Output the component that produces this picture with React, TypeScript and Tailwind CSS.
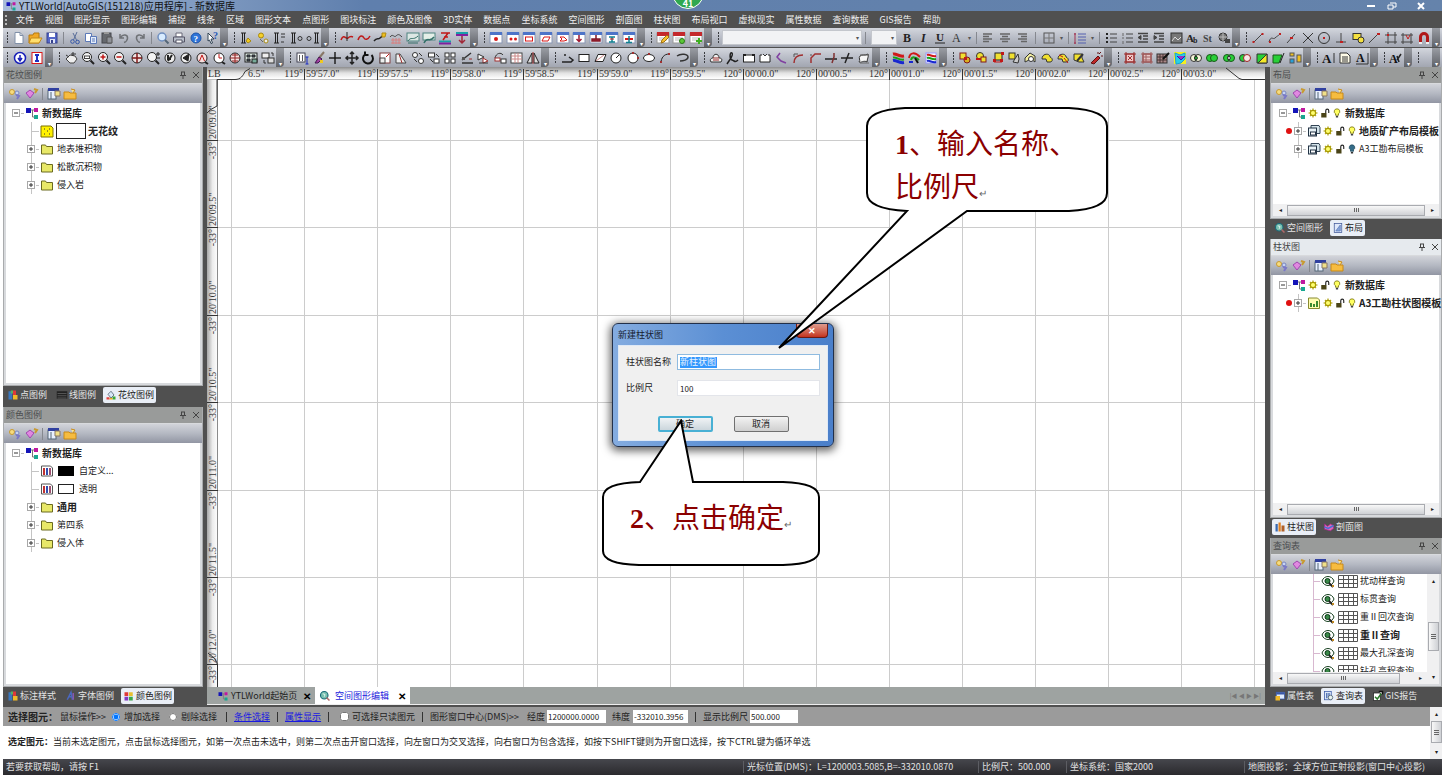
import React from 'react';

// small helpers for the 16x16 icon drawings
const p = (d: string, stroke = '#333', fill = 'none', w = 1) => <path d={d} stroke={stroke} fill={fill} strokeWidth={w} />;
const c = (cx: number, cy: number, r: number, stroke = '#333', fill = 'none', w = 1) => (
  <circle cx={cx} cy={cy} r={r} stroke={stroke} fill={fill} strokeWidth={w} />
);
const r = (x: number, y: number, w: number, h: number, fill = 'none', stroke = 'none') => (
  <rect x={x} y={y} width={w} height={h} fill={fill} stroke={stroke} />
);
const t = (s: string, x: number, y: number, fill = '#222', size = 10, weight = 700, style = 'normal') => (
  <text x={x} y={y} fill={fill} fontSize={size} fontWeight={weight} fontStyle={style} fontFamily="Liberation Serif, serif">{s}</text>
);

const lens = <>{c(7, 7, 4.5, '#222', '#f4f4f4')}{p('M10.5 10.5l3.5 3.5', '#222', 'none', 2)}</>;
const win = <>{r(2, 3, 12, 10, '#fff', '#8a97b5')}{r(2, 2, 12, 3, '#4d74c8')}</>;
const calendar = <>{r(2, 3, 12, 10, '#fff', '#999')}{r(2, 2, 12, 4, '#c4282c')}{p('M4 8h8M4 10h8', '#bbb')}</>;
const pillar = 'M3 3h5M3 13h5M4.5 3v10M6.500 3v10';
const pillarRight = 'M9 3h5M9 13h5M10.500 3v10M12.500 3v10';

const ICONS: Record<string, React.ReactNode> = {
  app: <>{r(2, 3, 5, 5, '#1414b8')}{r(10, 3, 4, 4, '#c018a0')}{r(10, 10, 4, 4, '#16a890')}{p('M7 5h3M8.500 5v7h2', '#777')}</>,
  new: <>{p('M4 2.500h5l3 3v8H4z', '#8090a8', '#fff')}{p('M9 2.500v3h3', '#8090a8')}</>,
  open: <>{p('M2 5h4l1-2h5v10H2z', '#b57a10', '#f0a826')}{p('M4 8h11l-3 5H2z', '#c58a18', '#ffdf6e')}</>,
  save: <>{r(3, 3, 10, 10, '#5568c8', '#34408c')}{r(5, 3, 6, 4, '#fff')}{r(6, 9, 5, 4, '#dfe4f6')}{r(7, 10, 2, 3, '#34408c')}</>,
  cut: <>{p('M10 2L6.500 10M6 3l4 8', '#5a6f9a')}{c(5.500, 11.500, 1.800, '#3557a8')}{c(10.500, 12, 1.800, '#3557a8')}</>,
  copy: <>{p('M2.500 3.500h6v8h-6z', '#5b79b8', '#fff')}{p('M7.500 6.500h6v7h-6z', '#5b79b8', '#e4edfb')}{p('M9 9h3M9 11h3', '#5b79b8')}</>,
  paste: <>{r(3, 3, 9, 10, '#66696e', '#44474c')}{r(5, 2, 5, 2, '#999')}{p('M8 7h5v6H8z', '#555', '#8f9298')}</>,
  undo: p('M4 4v4h4M4.500 7.500C7 3.500 12 4.500 11.500 8.500c-.3 2-2 3.500-3.500 4', '#6f7276', 'none', 1.500),
  redo: p('M12 4v4H8M11.500 7.500C9 3.500 4 4.500 4.500 8.500c.3 2 2 3.500 3.500 4', '#6f7276', 'none', 1.500),
  find: <>{c(7, 7, 4, '#6f8fc0', '#d8ecff', 1.500)}{p('M10 10l3.500 3.500', '#567', 'none', 2)}</>,
  print: <>{p('M5 3h6v4H5z', '#667', '#fff')}{p('M2.500 7h11v5h-11z', '#556', '#b8bfca')}{p('M5 10h6v3H5z', '#556', '#fff')}</>,
  help: <>{c(8, 8, 5, '#1d54a8', '#2f74d8')}{t('?', 5.500, 11.500, '#fff', 9)}</>,
  whats: <>{p('M4 3l6 6H7l1.500 4-1.500.5L5.500 10 4 11z', '#345', '#fff')}{t('?', 9, 9, '#2458b8', 10)}</>,
  bar1: <>{p(pillar, '#222')}{p('M10 8l3 3-3 2-2-2z', '#a88a10', '#f2c81e')}</>,
  bar2: <>{c(6, 5.500, 2.500, '#a88a10', '#f6d02a')}{c(11, 11, 2, '#a88a10', '#eee')}{p('M5 9l3 3', '#666')}</>,
  bar3: <>{p(pillar, '#222')}{p('M10 4h4M10 7h4M10 12h3', '#333')}</>,
  bar4: <>{p(pillar, '#222')}{c(12, 8.500, 2)}</>,
  bar5: <>{c(4, 8.500, 2)}{p(pillarRight, '#222')}</>,
  cv1: <>{p('M2 10c3-7 5 0 7-2s3-2 5-1', '#c01818', 'none', 1.500)}{p('M8 2v9', '#222')}</>,
  cv2: p('M2 10c2-6 5-4 6-2s4 2 6-2', '#c01818', 'none', 1.500),
  cv3: <>{p('M2 11c3-4 4-1 6-3s3-3 5-3', '#222', 'none', 1.500)}{p('M10 3l4 0-1 4-3 0z', '#b08a10', '#f0c020')}</>,
  cv4: <>{p('M2 7c3-4 4 1 6-1s3-2 6 1', '#444')}{p('M3 10h10M3 13h10M5 8v6M8 8v6M11 8v6', '#d88080')}</>,
  pic1: <>{r(2, 3, 12, 8, '#dce7e4', '#4e8480')}{p('M3 11c3-5 5 0 10-5M3 13h10', '#347068')}</>,
  pic2: <>{r(2, 3, 12, 7, '#e4efe8', '#4e8480')}{p('M3 13c3-7 6 0 10-6', '#347068', 'none', 1.500)}</>,
  hh1: <>{p('M2 11.500h12', '#18a0a8', 'none', 2)}{p('M2 13.500h12', '#8020a0', 'none', 2)}{p('M4 3h9M11 3L6 10M7 7h4', '#c01818', 'none', 1.500)}</>,
  hh2: <>{p('M2 3h12', '#18a0a8', 'none', 2)}{p('M2 5h12', '#8020a0', 'none', 2)}{p('M8 6v7M5 10l3 3 3-3', '#a02838', 'none', 1.500)}</>,
  wDot: <>{win}{c(8, 9, 2, 'none', '#d81818')}</>,
  wDots: <>{win}{c(6, 9, 1.500, 'none', '#d81818')}{c(10.500, 9, 1.500, 'none', '#d81818')}</>,
  wRect: <>{win}{r(4.500, 7, 7, 4, 'none', '#d81818')}</>,
  wPara: <>{win}{p('M6 7h6l-2 4H4z', '#d81818')}</>,
  wPoly: <>{win}{p('M5 7h4l3 3-3 1-4 0 2-2z', '#d81818')}</>,
  wIn: <>{win}{p('M8 5v6M5.500 9L8 11.500 10.500 9', '#a01830', 'none', 1.500)}</>,
  wStamp: <>{win}{p('M8 5v4M4 11h8v-2H4z', '#801828', '#c02030', 1.500)}</>,
  wCol: <>{win}{p('M5 7h6M8 7v5M5 12h6', '#108090', 'none', 1.500)}{p('M6 9h4', '#d81818')}</>,
  wCol2: <>{win}{p('M4 9h8', '#d81818', 'none', 2)}{p('M8 6v7M5 12.500h6', '#108090', 'none', 1.500)}</>,
  calPen: <>{calendar}{p('M6 13l1-3 5-5 2 2-5 5z', '#a07010', '#f6c030')}</>,
  calDot: <>{calendar}{c(11, 11, 2.500, '#287a18', '#5cc838')}</>,
  calPlus: <>{calendar}{p('M11 8v6M8 11h6', '#3eae20', 'none', 2)}</>,
  bold: t('B', 4, 12, '#222', 12),
  italic: t('I', 5, 12, '#222', 12, 700, 'italic'),
  under: <>{t('U', 4, 11, '#222', 11)}{p('M3 13h10', '#222')}</>,
  fontA: t('A', 3, 12, '#333', 12, 400),
  alignL: p('M3 4h9M3 6.500h6M3 9h9M3 11.500h6', '#666', 'none', 1.500),
  alignC: p('M3 4h10M5 6.500h6M3 9h10M5 11.500h6', '#666', 'none', 1.500),
  alignR: p('M4 4h9M7 6.500h6M4 9h9M7 11.500h6', '#666', 'none', 1.500),
  border: <>{r(3, 3, 10, 10, 'none', '#555')}{p('M8 3v10M3 8h10', '#777')}</>,
  spacing: <>{p('M6 4h8M6 7h8M6 10h8M6 13h8', '#5560b0')}{p('M3 3v11M2 4h2M2 13h2', '#a03050')}</>,
  list1: <>{p('M7 4h7M7 8h7M7 12h7', '#444')}{p('M3 4h2M3 8h2M3 12h2', '#222', 'none', 2)}</>,
  list2: <>{p('M7 4h7M7 8h7M7 12h7', '#444')}{p('M4 3v3M4 7v2M4 11v3', '#666')}</>,
  indent1: <>{p('M3 3.500h10M8 6h5M8 9h5M3 12h10', '#444', 'none', 1.500)}{p('M6 5.500v4L3 7.500z', '#444', '#444')}</>,
  indent2: <>{p('M3 3.500h10M8 6h5M8 9h5M3 12h10', '#444', 'none', 1.500)}{p('M3 5.500v4l3-2z', '#444', '#444')}</>,
  photo: <>{r(3, 3, 11, 10, '#777', '#333')}{p('M4 11l3-4 3 3 3-3', '#ddd')}</>,
  fontAb: <>{t('A', 2, 12, '#222', 11)}{t('b', 9, 13, '#222', 8)}</>,
  st: t('St', 3, 12, '#444', 10),
  globe: <>{c(7, 7, 4, '#333', '#777')}{p('M3 7h8M7 3v8', '#bbb')}{r(9, 9, 5, 4, '#444')}</>,
  sn1: <>{p('M4 12l8-8', '#444')}{r(2.500, 11, 2, 2, '#c02020')}{r(11.500, 3, 2, 2, '#c02020')}</>,
  sn2: <>{p('M2 12c2-7 4-2 6-4s3-2 5-4', '#444')}{r(2, 11, 2, 2, '#c02020')}{r(12, 3, 2, 2, '#c02020')}</>,
  sn3: <>{p('M4 13l8-9', '#444')}{r(7, 7, 3, 2, '#c02020')}</>,
  sn4: p('M3 3l10 10M13 3L3 13', '#333'),
  sn5: <>{c(8, 8, 5.500)}{r(7, 7, 2, 2, '#c02020')}</>,
  sn6: <>{p('M8 3v9M3 12h10', '#444')}{r(7, 11, 3, 2, '#c02020')}</>,
  sn7: <>{r(3, 3.500, 8, 6, '#f4e040', '#333')}{c(11, 10, 3, '#333', '#f4e040')}</>,
  sn8: <>{p('M3 13l9-9', '#444')}{r(11, 3, 3, 2, '#c02020')}</>,
  sn9: <>{p('M5 2v12M12 2v12M2 5h12M2 12h12', '#444')}{r(4, 4, 2, 2, '#c02020')}</>,
  sn10: <>{p('M4 3v11M12 3v11M2 5h12M2 12h12', '#444')}{p('M7 5l2 4 2-4', '#c02020')}</>,
  magnet: <>{p('M4.500 12V7a3.500 3.500 0 017 0v5', '#b01818', 'none', 3)}{p('M3 13h3M10 13h3', '#eee', 'none', 2)}</>,

  info: <>{c(8, 8, 5.500, '#1820b8', '#fff', 1.500)}{p('M8 5v6M6 8l2 3 2-3', '#1820b8', 'none', 1.500)}</>,
  redPage: <>{r(3, 2.500, 10, 11, '#fff', '#d81818')}{p('M6 5h4M8 4v7M6 11h4', '#2030c0', 'none', 2)}</>,
  pan: <>{p('M3 9l4-4 5 1 2 3-3 4H7z', '#444', '#eee')}{p('M10 2v4M8 4h5M3 5l3 2', '#333')}</>,
  zWin: <>{lens}{r(4.500, 6, 5, 2.500, '#fff', '#444')}</>,
  zIn: <>{lens}{p('M4.500 7h5M7 4.500v5', '#c01818', 'none', 1.500)}</>,
  zOut: <>{lens}{p('M4.500 7h5', '#c01818', 'none', 1.500)}</>,
  zFull: <>{c(8, 8, 5, '#222', '#f0e4e4')}{p('M3 8h10M8 3v10', '#801818', 'none', 1.500)}</>,
  zDyn: <>{lens}{p('M11 4h4M13 2v4M11 8h4', '#222')}</>,
  zPrev: <>{c(8, 8, 5, '#222', '#eee')}{p('M6 11l4-6M6 5v4h3', '#222', 'none', 2)}</>,
  zNext: <>{c(8, 8, 5, '#222', '#eee')}{p('M11 4L5 8l5 3z', '#222', '#222')}</>,
  zA: <>{c(8, 8, 5, '#222', '#f6e0e0')}{p('M5.500 11L8 5l2.500 6', '#c01818')}{p('M11 12l3 2', '#222', 'none', 2)}</>,
  zClock: <>{c(8, 8, 5, '#222', '#fff')}{p('M8 4v4h3', '#c01818')}{p('M11 12l3 2', '#222', 'none', 2)}</>,
  zGlobe: <>{c(8, 8, 5, '#222', '#f6e0e0')}{p('M3 8h10M8 3v10M5 5h6M5 11h6', '#902020')}</>,
  layers: <>{r(2, 3, 12, 9, '#d8e4e0', '#222')}{p('M4 5h3v2H4zM9 5h3v2H9zM4 9h3v2H4z', '#222', '#456')}{r(9, 9, 5, 4, '#7a9', '#222')}</>,
  swap: <>{r(2, 3, 7, 5, '#eee', '#333')}{r(8, 8, 6, 5, '#ddd', '#333')}{p('M11 3h2v3M4 10v3h2', '#333')}</>,
  select: <>{r(3, 3, 8, 9, '#fff', '#445')}{p('M5 6h1M8 6h1M5 8h1M8 8h1M5 10h1M8 10h1', '#222', 'none', 1.500)}{p('M13 7v7M11.500 7h3M11.500 14h3', '#1828c0', 'none', 1)}</>,
  brush: <>{p('M13 2L8 8', '#876', 'none', 2)}{p('M4 13l4-6 3 2-4 4z', '#401850', '#a040a0')}{r(9, 10, 3, 3, '#f0c820')}</>,
  move1: <>{p('M8 2v12M2 8h12', '#222', 'none', 1.500)}{r(7, 7, 2, 2, '#222')}</>,
  move: p('M8 2v12M2 8h12M6 4l2-2 2 2M6 12l2 2 2-2M4 6L2 8l2 2M12 6l2 2-2 2', '#222', 'none', 1.500),
  rotate: p('M5 4.500A5 5 0 1011.500 5M5 1.500v3.500h3.500', '#111', 'none', 2),
  scale: <>{r(3, 3, 10, 10, '#fff', '#804040')}{r(3, 8, 5, 5, '#eee', '#444')}{p('M9 7l3-3', '#c02020')}</>,
  skew: <>{p('M3 13V4h4l6 9z', '#444', '#eee')}{p('M6 4l3 9', '#a03030')}</>,
  cp1: <>{c(5, 5, 2.500, '#333', '#fff')}{c(11, 11, 2.500, '#333', '#fff')}{p('M9 3l3 3M4 9l3 3', '#333')}</>,
  cp2: <>{r(2.500, 3, 6, 4, '#fff', '#333')}{r(8, 9, 5, 4, '#fff', '#333')}{p('M10 4l3 3M4 9l3 3', '#333')}</>,
  array: <>{r(3, 3, 4, 4, '#fff', '#333')}{r(9, 3, 4, 4, '#fff', '#333')}{r(3, 9, 4, 4, '#fff', '#333')}{r(9, 9, 4, 4, '#fff', '#333')}</>,
  offset: <>{p('M3 10l9-7M3 13h11', '#333', 'none', 1.500)}{r(3, 7, 3, 3, '#555')}{p('M10 9h3', '#a03030')}</>,
  arr2: <>{p('M3 4l6 3-6 3z', '#333', '#fff')}{p('M8 8l5 3-5 2z', '#a03030', '#fff')}{p('M4 13h9', '#333')}</>,
  arr3: <>{p('M3 8c1-5 6-6 8-3', '#333')}{r(3, 8, 5, 3, '#fff', '#a03030')}{r(9, 9, 5, 4, '#fff', '#333')}</>,
  hatch: <>{r(3, 3, 11, 10, '#fff', '#444')}{p('M3 6h11M3 9h11M7 3v10M10 3v10', '#c88')}</>,
  mirror: <>{p('M7 3v10H2z', '#222', '#ddd')}{p('M9 3v10h5z', '#222', '#ddd')}{p('M8 2v12', '#a03030')}</>,
  pl: p('M3 12h9l2-2-4-3M5 5h2', '#222', 'none', 1.500),
  rect: r(3, 4.500, 10, 7, '#fff', '#222'),
  para: <>{p('M6 4.500h8l-3 7H3z', '#222', '#fff')}{p('M4 11l8-6', '#c88')}</>,
  circ: <>{c(8, 8, 5, '#222', '#fff')}{p('M8 8l3-3', '#222')}</>,
  circ2: <>{c(8, 8, 5, '#222', '#fff')}{r(7, 2, 2, 2, '#a03030')}{r(12, 7, 2, 2, '#a03030')}</>,
  ellipse: <><ellipse cx="8" cy="8" rx="5.500" ry="3.500" fill="#fff" stroke="#222" />{r(7, 3, 2, 2, '#a03030')}</>,
  arc: <>{p('M4 13c0-5 3-9 8-9', '#222')}{r(3, 11, 2, 2, '#a03030')}{r(11, 3, 2, 2, '#a03030')}</>,
  arcE: p('M3 6c4-3 11-2 11 1s-5 4-8 4', '#333', 'none', 1.500),
  cloud: <>{p('M3 12c-2-3 1-4 2-4 0-5 6-5 6 0 2 0 4 1 2 4z', '#333', '#eee')}{p('M5 10h6M5 8h6', '#a03030')}</>,
  free: p('M2 14c3-5 7-9 5-11S4 9 7 10s3 3 6 0', '#222', 'none', 1.500),
  box1: <>{r(2.500, 5, 11, 7, '#fff', '#222')}{p('M2 5h3M11 5h3', '#222', 'none', 2)}</>,
  box2: <>{p('M5 5H3v7h10V5h-2', '#222', '#fff')}{p('M6 4l2 2 2-2', '#333')}</>,
  dots: p('M6 3L3 7l4 4 5 2', '#8040a0', 'none', 1.500),
  fil1: <>{p('M4 13c0-6 3-8 9-8', '#a03030', 'none', 1.500)}{p('M4 4v3M4 4h4', '#555')}</>,
  fil2: <>{p('M4 13V8l4-4h6', '#a03030', 'none', 1.500)}{p('M4 4v2', '#555')}</>,
  trim: <>{p('M2 9h7M9 9h5', '#222', 'none', 1.500)}{p('M11 3v4l-2 6', '#803030', 'none', 1.500)}</>,
  extend: p('M2 8h12M6 13l4-10', '#222', 'none', 1.500),
  scroll: <>{p('M3 12c2-2-1-4 1-6s5 0 8-2c1 3-1 5-1 8-3-2-6 1-8 0z', '#333', '#f6f6f6')}{p('M4 5h9M4 13h9', '#666')}</>,
  rib1: <>{p('M3 4c4-1 5 3 11 2', '#d01818', 'none', 3)}{p('M3 7.500c4-1 5 3 11 2', '#18a018', 'none', 2)}{p('M3 10.500c4-1 5 3 11 2', '#1828d0', 'none', 3)}</>,
  rib2: <>{p('M3 8c1-6 6-6 11-1', '#d01818', 'none', 2)}{p('M5 10c1-4 5-3 8 0', '#18a018', 'none', 2)}{p('M9 8l3 5', '#111', 'none', 2)}{p('M3 12h4', '#1828d0', 'none', 2)}</>,
  rib3: <>{r(3, 3, 10, 10, '#fff', '#99f')}{p('M4 5c3-1 5 2 9 1', '#d01818', 'none', 2)}{p('M4 8c3-1 5 2 9 1', '#18a018', 'none', 2)}{p('M4 11c3-1 5 2 9 1', '#1828d0', 'none', 2)}</>,
  cmb1: <>{r(3, 3, 6, 6, '#f0e030', '#801818')}{c(10, 10, 3, '#801818', '#d8b020')}{r(7, 7, 3, 3, '#c01818')}</>,
  cmb2: <>{c(7, 6, 3.500, '#333', '#f0e030')}{r(8, 7, 5, 5, '#f0e030', '#801818')}{r(3, 8, 5, 2, '#c01818')}</>,
  cmb3: <>{r(5, 3, 7, 7, '#f0e030', '#222')}{r(3, 9, 3, 3, '#c01818')}{r(10, 9, 3, 3, '#c01818')}{r(11, 2, 3, 3, '#c01818')}{p('M4 12h8', '#c01818')}</>,
  cmb4: <>{r(3, 3, 6, 6, '#f0e030', '#333')}{p('M12 4l-5 8 5 1 1-4z', '#333', '#ccc')}</>,
  cmb5: <>{p('M3 12V8l5-5 5 3v6l-4-3z', '#333', '#f4f0a0')}{c(9, 9, 2.500, '#333', '#fff')}</>,
  cmb6: <>{p('M3 9c0-6 8-6 8-2 3 1 3 5 0 5H8l-1-3z', '#333', '#f0e030')}</>,
  cmb7: <>{p('M3 9c0-6 8-6 8-2 3 1 3 5 0 5H8l-1-3z', '#333', '#f0e030')}{p('M9 8l4 5M4 5l4 2', '#c01818')}</>,
  cmb8: <>{p('M3 10V4h8v4l2 4H8z', '#333', '#f0e030')}{p('M6 11l6-7', '#333', 'none', 2)}</>,
  wand: <>{p('M3 13l7-7 2 2-6 6z', '#601010', '#c02828')}{p('M11 4l2-2M13 6h2M10 2v2', '#601010')}</>,
  gr1: <>{r(4, 4, 8, 8, '#f0c8c8', '#8a2020')}{p('M4 2v12M12 2v12M2 4h12M2 12h12M6 6l4 4M10 6l-4 4', '#a03030')}</>,
  gr2: <>{r(4, 4, 8, 8, '#e8c8c8', '#8a2020')}{p('M4 2v12M12 2v12M2 4h12M2 12h12M4 7h8M4 10h8M7 4v8', '#a06060')}</>,
  gr3: <>{r(2, 4, 10, 9, '#a88', '#333')}{p('M2 7h10M2 10h10M5 4v9M8 4v9', '#433')}{p('M8 9l6-6', '#111', 'none', 2)}</>,
  poly: <>{r(2, 2, 12, 12, '#f4f020')}{p('M3 3l5 2 5-2v6l-4 4-5 1z', '#18a0d8', '#28d0e8')}{p('M5 6l4 4 4-4', '#2020c0', '#a030c0')}</>,
  vn1: <>{c(6, 8, 3.500, '#333', '#f6f6d8')}{c(10, 8, 3.500, '#333', '#f6f6d8')}{p('M8 5.500q3 2.500 0 5q-3-2.500 0-5', '#222', '#20c030')}</>,
  vn2: <>{c(6, 8, 3.500, '#185818', '#28d038')}{c(10, 8, 3.500, '#185818', '#28d038')}</>,
  vn3: <>{c(6, 8, 3.500, '#185818', '#28d038')}{c(10, 8, 3.500, '#185818', '#28d038')}{p('M8 5.500q3 2.500 0 5q-3-2.500 0-5', '#222', '#f6f6f6')}</>,
  vn4: <>{c(6, 8, 3.500, '#333', '#28d038')}{c(10, 8, 3.500, '#a02020', '#f8e8e8')}</>,
  tri1: <>{p('M3 4h10v9H3z', '#333', '#28d038')}{p('M13 4v9H4z', '#333', '#f4e828')}</>,
  tri2: <>{p('M3 5h9l-3 8H3z', '#185818', '#28d038')}{p('M14 3l-4 10', '#222')}</>,
  blk: <>{r(3, 3, 4, 3, '#f0c020', '#555')}{r(3, 9, 4, 4, '#28a0d8', '#555')}{r(10, 5, 4, 7, '#f0c020', '#555')}</>,
  txtA: <>{t('A', 1, 13, '#111', 13)}{p('M13 3v10', '#333')}</>,
  doc: <>{p('M3 3h7l3 3v7H3z', '#333', '#fffce8')}{p('M5 7h6M5 9h6M5 11h6', '#333')}</>,
  txtB: <>{t('A', 2, 12, '#111', 12)}{p('M2 14h12V3', '#333')}</>,
  txtV: <>{t('A', 1, 13, '#111', 12)}{p('M9 10l4-6M9 6l2 6', '#222', 'none', 1.500)}</>,

  key: <>{c(5, 6, 2.500, '#c89a30', '#f6dc80')}{c(10, 7, 2, '#7a88c0', '#c8d4f4')}{p('M9 9l3 1-2 3', '#7a78c8', 'none', 2)}</>,
  tag: <>{p('M3 7l4-3 4 3-4 5z', '#a048b0', '#e088e0')}{p('M11 3l3 1-2 3', '#c89a30', 'none', 2)}</>,
  table: <>{r(2, 4, 8, 9, '#e8f0ff', '#567')}{r(2, 2, 11, 3, '#3040a0')}{p('M5 6v7', '#567')}{p('M9 5h5v5H9z', '#876', '#f0e088')}</>,
  folderNew: <>{p('M2 6h5l1 1h6v6H2z', '#c88a18', '#f6bc40')}{p('M9 3l4 1-2 3', '#c88a18', '#ffe890')}</>,
  folder: p('M2.500 4h4l1 1.500h6V13h-11z', '#6a6a20', '#e8e868'),
  pattern: <>{p('M2 3h10l2 2v9H2z', '#7a7000', '#fff200')}{p('M5 6h1M10 6h1M5 11h1M10 11h1M8 8h1', '#333')}</>,
  color: <>{p('M2.500 3h9l2 2v8h-11z', '#555', '#fff')}{p('M5 5v7', '#c03030', 'none', 2)}{p('M8 5v7', '#3050b0', 'none', 2)}{p('M11 5v7', '#a05070', 'none', 2)}</>,
  sun: <>{c(8, 8, 3.500, '#a89a00', '#ffff70', 1.500)}{p('M8 2v2M8 12v2M2 8h2M12 8h2M4 4l1 1M11 11l1 1M12 4l-1 1M4 12l1-1', '#a89a00', 'none', 1.500)}</>,
  lock: <>{r(3, 8, 7, 6, '#4a4418')}{p('M9 8V5c0-3 4-3 4 0v3', '#222', 'none', 1.500)}</>,
  bulb: <>{p('M8 2.500a3.500 3.500 0 00-2 6.500v2h4V9a3.500 3.500 0 00-2-6.500z', '#6a6400', '#ffff60')}{p('M6.500 13h3', '#444', 'none', 2)}</>,
  bulbOff: <>{p('M8 2.500a3.500 3.500 0 00-2 6.500v2h4V9a3.500 3.500 0 00-2-6.500z', '#1c4658', '#356c88')}{p('M6.500 13h3', '#333', 'none', 2)}</>,
  layout: <>{p('M5 2.500h8l1 2v6H5z', '#345', '#d4e4ea')}{r(2.500, 5, 8, 8, '#e8f2f6', '#234')}{r(4.500, 9, 5, 3, '#fff', '#234')}</>,
  column: <>{p('M2.500 3h9l2 2v8.500h-11z', '#888a30', '#fffcb0')}{p('M5 12V8M8 12V9M11 12V6', '#3a8a30', 'none', 2)}</>,
  eye: <>{p('M2 8c2-6 10-6 12 0-2 6-10 6-12 0z', '#184020', '#fff')}{c(7.500, 8, 2.500, '#0c3c18', '#3a8848')}{p('M9 10l4 4', '#222', 'none', 2)}{r(12, 12, 2, 2, '#c08820')}</>,
  tabPoint: <>{r(2, 3, 5, 11, '#3a78c0')}{r(8, 2, 4, 6, '#e03838')}{r(8, 8, 6, 6, '#f0b828')}{r(5, 2, 3, 4, '#58b060')}</>,
  tabLine: <>{r(1, 3, 14, 10, '#222')}{p('M2 6h12M2 9h12M2 12h12', '#666')}</>,
  tabPat: <>{p('M4 7l4-4 4 5-4 4z', '#456', '#d8e8f8')}{r(2, 11, 4, 3, '#e04040')}{r(10, 10, 4, 4, '#38a838')}{r(6, 12, 4, 2, '#f0b020')}</>,
  tabFont: <>{p('M3 13L8 3l2 10M5 9h5', '#4a68c0', 'none', 2)}{p('M11 4v9', '#8858b0', 'none', 2)}</>,
  tabColor: <>{r(2, 3, 5, 5, '#e03838')}{r(8, 3, 5, 5, '#e8c030')}{r(2, 9, 5, 5, '#8038c0')}{r(8, 9, 5, 5, '#38a848')}</>,
  tabSpace: <>{c(7, 7, 5, '#186878', '#78c0b0', 1.500)}{p('M5 5l3 1-1 3', '#fff')}{p('M10 10l4 4', '#b06868', 'none', 2)}</>,
  tabLayout: <>{r(3, 2, 10, 12, '#dfe8fa', '#405898')}{p('M5 12l6-8v8z', '#5878b8', '#88a4d8')}</>,
  tabCol: <>{r(2, 4, 3, 10, '#3868b0')}{r(6, 2, 3, 12, '#e08020')}{r(10, 6, 4, 8, '#b06028')}</>,
  tabSec: <>{p('M2 4l4 3 4-3 4 2v4l-4 3-8-2z', '#a02888', '#e068b8')}{p('M2 8l5 2 7-4', '#4870d8', 'none', 2)}</>,
  tabProp: <>{r(3, 3, 11, 9, '#e0ecfc', '#3858a8')}{r(3, 3, 11, 3, '#3858a8')}{r(2, 8, 6, 6, '#f0b828')}</>,
  tabQuery: <>{r(2, 2, 9, 11, '#dce8f8', '#3858a8')}{p('M5 4v7M8 4v7', '#5878b8', 'none', 2)}{c(10, 10, 3, '#456', '#e8f4f0')}</>,
  tabRep: <>{r(2, 4, 9, 10, '#fff', '#222')}{p('M4 9l3 3 6-8', '#287828', 'none', 2)}{p('M9 2h5v4', '#111', '#fff', 2)}</>,
};

const Icon: React.FC<{ name: string; small?: boolean }> = ({ name, small }) => (
  <svg viewBox="0 0 16 16" className={small ? 'size-3 shrink-0' : 'size-4 shrink-0'} aria-hidden="true">{ICONS[name]}</svg>
);

const MENU = ['文件', '视图', '图形显示', '图形编辑', '捕捉', '线条', '区域', '图形文本', '点图形', '图块标注', '颜色及图像', '3D实体', '数据点', '坐标系统', '空间图形', '剖面图', '柱状图', '布局视口', '虚拟现实', '属性数据', '查询数据', 'GIS报告', '帮助'];

interface Group {
  width: string;
  icons: string[];
}

const ROW_ONE: Group[] = [
  { width: 'w-[227px]', icons: ['new', 'open', 'save', '|', 'cut', 'copy', 'paste', 'undo', 'redo', '|', 'find', 'print', 'help', 'whats'] },
  { width: 'w-[101px]', icons: ['bar1', 'bar2', 'bar3', 'bar4', 'bar5'] },
  { width: 'w-[149px]', icons: ['cv1', 'cv2', 'cv3', 'cv4', 'pic1', 'pic2', 'hh1', 'hh2'] },
  { width: 'w-[167px]', icons: ['wDot', 'wDots', 'wRect', 'wPara', 'wPoly', 'wIn', 'wStamp', 'wCol', 'wCol2'] },
  { width: 'w-[67px]', icons: ['calPen', 'calDot', 'calPlus'] },
];

const ROW_TWO: Group[] = [
  { width: 'w-[52px]', icons: ['info', 'redPage'] },
  { width: 'w-[231px]', icons: ['pan', 'zWin', 'zIn', 'zOut', 'zFull', 'zDyn', 'zPrev', 'zNext', 'zA', 'zClock', 'zGlobe', 'layers', 'swap'] },
  { width: 'w-[265px]', icons: ['select', 'brush', 'move1', 'move', 'rotate', 'scale', 'skew', 'cp1', 'cp2', 'array', 'offset', 'arr2', 'arr3', 'hatch', 'mirror'] },
  { width: 'w-[149px]', icons: ['pl', 'rect', 'para', 'circ', 'circ2', 'ellipse', 'arc', 'arcE'] },
  { width: 'w-[182px]', icons: ['cloud', 'free', 'box1', 'box2', 'dots', 'fil1', 'fil2', 'trim', 'extend', 'scroll'] },
  { width: 'w-[67px]', icons: ['rib1', 'rib2', 'rib3'] },
  { width: 'w-[165px]', icons: ['cmb1', 'cmb2', 'cmb3', 'cmb4', 'cmb5', 'cmb6', 'cmb7', 'cmb8', 'wand'] },
  { width: 'w-[199px]', icons: ['gr1', 'gr2', 'gr3', 'poly', 'vn1', 'vn2', 'vn3', 'vn4', 'tri1', 'tri2', 'blk'] },
  { width: 'w-[67px]', icons: ['txtA', 'doc', 'txtB'] },
  { width: 'w-[34px]', icons: ['txtV'] },
  { width: 'flex-1', icons: [] },
];

const Sep: React.FC<{ tight?: boolean }> = ({ tight }) => (
  <span className={`w-px h-3 bg-[#85888f] shrink-0 ${tight ? 'mx-[3px]' : 'mx-[5px]'}`} />
);

const ToolIcons: React.FC<{ icons: string[] }> = ({ icons }) => (
  <>
    {icons.map((name, i) =>
      name === '|' ? <Sep key={i} tight /> : (
        <button key={i} aria-label={name} className="flex-1 flex justify-center min-w-0">
          <Icon name={name} />
        </button>
      )
    )}
  </>
);

const ToolGroup: React.FC<{ width: string; children?: React.ReactNode }> = ({ width, children }) => (
  <div className={`flex h-full items-center min-w-0 bg-linear-to-b from-[#d3d6dd] via-[#b9bdc7] to-[#a2a6b1] ${width}`}>
    <span className="w-2 h-[11px] shrink-0 flex flex-col justify-between items-center">
      {[0, 1, 2, 3].map(i => <i key={i} className="w-px h-[2px] bg-[#3a3c40]" />)}
    </span>
    <div className="flex-1 flex items-center min-w-0">{children}</div>
    <span className="w-2 mr-[2px] h-full shrink-0 rounded-br bg-linear-to-b from-[#9a9da4] to-[#606268] flex flex-col justify-end items-center text-[6px] leading-[7px] text-white">▾</span>
  </div>
);

const Caret = () => <span className="text-[6px] text-[#555] w-[8px] text-center">▾</span>;

const FormatBar = () => (
  <div className="flex items-center flex-1">
    <span className="flex items-center w-[140px] h-[15px] bg-[#f2f3f5] border border-[#c4c7cd]">
      <select aria-label="字体" className="flex-1 h-full appearance-none" />
      <Caret />
    </span>
    <Sep tight />
    <span className="flex items-center w-[26px] h-[15px] mx-[2px] bg-[#f2f3f5] border border-[#c4c7cd]">
      <select aria-label="字号" className="flex-1 min-w-0 h-full appearance-none" />
      <Caret />
    </span>
    <div className="flex w-[66px]"><ToolIcons icons={['bold', 'italic', 'under', 'fontA']} /></div>
    <Caret />
    <Sep tight />
    <div className="flex w-[50px]"><ToolIcons icons={['alignL', 'alignC', 'alignR']} /></div>
    <Sep />
    <button aria-label="边框"><Icon name="border" /></button>
    <Caret />
    <Sep tight />
    <button aria-label="行距"><Icon name="spacing" /></button>
    <Caret />
    <Sep tight />
    <div className="flex flex-1"><ToolIcons icons={['list1', 'list2', 'indent1', 'indent2', 'photo', 'fontAb', 'st', 'globe']} /></div>
  </div>
);

const PanelTitle: React.FC<{ title: string; active?: boolean }> = ({ title, active }) => (
  <div className={`flex items-center h-4 px-[2px] shrink-0 ${active ? 'bg-[#e6eaee] text-[#444]' : 'bg-[#999b9a] text-[#4c4e50]'}`}>
    <span>{title}</span>
    <button aria-label="固定" className="ml-auto mr-[5px]">
      <svg viewBox="0 0 8 8" className="size-2"><path d="M2 1h4M2.500 1v3.500M5.500 1v3.500M1 4.500h6M4 4.500V8" stroke="#444" fill="none" /></svg>
    </button>
    <button aria-label="关闭">
      <svg viewBox="0 0 8 8" className="size-2"><path d="M1 1l6 6M7 1L1 7" stroke="#444" fill="none" /></svg>
    </button>
  </div>
);

const PanelTools = () => (
  <div className="flex items-center h-[19px] mt-px px-[3px] shrink-0 bg-linear-to-b from-[#d2d4da] via-[#b4b8c2] to-[#9296a3]">
    <button aria-label="锁定"><Icon name="key" /></button>
    <button aria-label="标签"><Icon name="tag" /></button>
    <Sep tight />
    <button aria-label="表格"><Icon name="table" /></button>
    <button aria-label="新建文件夹"><Icon name="folderNew" /></button>
  </div>
);

interface DockTab {
  icon: string;
  label: string;
  active?: boolean;
}

const DockTabs: React.FC<{ tabs: DockTab[] }> = ({ tabs }) => (
  <div className="flex items-center h-[18px] shrink-0 px-[2px] gap-[5px] whitespace-nowrap">
    {tabs.map(tab => (
      <button key={tab.label} className={`flex items-center gap-px h-4 px-[2px] rounded-xs ${tab.active ? 'bg-[#e9eef6] text-[#222]' : 'text-[#e4e4e4]'}`}>
        <Icon name={tab.icon} small />
        {tab.label}
      </button>
    ))}
  </div>
);

const Panel: React.FC<{ title: string; active?: boolean; size: string; tabs: DockTab[]; children: React.ReactNode }> = ({ title, active, size, tabs, children }) => (
  <section className={`flex flex-col min-h-0 ${size}`}>
    <div className="flex flex-col flex-1 min-h-0 border border-[#a9abad] border-t-0 bg-[#d8dadd]">
      <PanelTitle title={title} active={active} />
      <PanelTools />
      <div className="flex flex-col flex-1 min-h-0 mx-[2px] mb-[2px] bg-white">{children}</div>
    </div>
    <DockTabs tabs={tabs} />
  </section>
);

const Expander: React.FC<{ open?: boolean }> = ({ open }) => (
  <svg viewBox="0 0 9 9" className="size-[9px] shrink-0 relative z-10">
    <rect x="0.500" y="0.500" width="7" height="7" fill="#fff" stroke="#a8a8a8" />
    <path d={open ? 'M2 4h4' : 'M2 4h4M4 2v4'} stroke="#333" />
  </svg>
);

const Flags: React.FC<{ off?: boolean }> = ({ off }) => (
  <span className="flex shrink-0">
    <Icon name="sun" small />
    <Icon name="lock" small />
    <Icon name={off ? 'bulbOff' : 'bulb'} small />
  </span>
);

const Root: React.FC<{ flags?: boolean }> = ({ flags }) => (
  <div className="flex items-center h-[18px] pl-[6px]">
    <Expander open />
    <span className="w-[3px] h-px bg-[#bbb]" />
    <Icon name="app" />
    {flags && <Flags />}
    <span className="ml-[2px] text-[10px] font-bold whitespace-nowrap">新数据库</span>
  </div>
);

const Leaf: React.FC<{ expand?: boolean; dot?: boolean; bold?: boolean; icon: string; label: string; children?: React.ReactNode }> = ({ expand, dot, bold, icon, label, children }) => (
  <div className="flex items-center h-[18px] pl-[13px] shrink-0">
    <span className="w-[8px] shrink-0">{dot && <span className="block size-[6px] rounded-full bg-[#e01010]" />}</span>
    <span className="self-stretch w-[12px] shrink-0 flex items-center relative">
      <span className="absolute left-1 inset-y-0 w-px bg-[#c4c4c4]" />
      {expand ? <Expander /> : <span className="w-1" />}
      <span className="flex-1 h-px bg-[#c4c4c4]" />
    </span>
    <Icon name={icon} />
    {children}
    <span className={`whitespace-nowrap ${children ? 'ml-px' : 'ml-[2px]'} ${bold ? 'text-[10px] font-bold' : ''}`}>{label}</span>
  </div>
);

const HScroll: React.FC<{ thumb: string }> = ({ thumb }) => (
  <div className="flex items-center h-3 mt-auto shrink-0 bg-[#f0f0f1] text-[6px] text-[#222]">
    <span className="w-[14px] text-center">◂</span>
    <span className="flex-1 h-[11px]">
      <span className={`flex justify-center items-center gap-px h-full border border-[#a9abb0] bg-linear-to-b from-[#f8f8f8] to-[#cfd1d5] ${thumb}`}>
        {[0, 1, 2].map(i => <i key={i} className="w-px h-1 bg-[#666]" />)}
      </span>
    </span>
    <span className="w-[14px] text-center">▸</span>
  </div>
);

const VScroll: React.FC<{ top: string; thumb: string }> = ({ top, thumb }) => (
  <div className="flex flex-col items-center w-3 shrink-0 bg-[#f0f0f1] text-[6px] leading-[14px]">
    <span>▴</span>
    <span className={top} />
    <span className={`flex flex-col items-center justify-center gap-px w-[11px] border border-[#a9abb0] bg-linear-to-r from-[#f8f8f8] to-[#cfd1d5] ${thumb}`}>
      {[0, 1, 2].map(i => <i key={i} className="w-[5px] h-px bg-[#666]" />)}
    </span>
    <span className="mt-auto">▾</span>
  </div>
);

const QUERIES = ['扰动样查询', '标贯查询', '重Ⅱ回次查询', '重Ⅱ查询', '最大孔深查询', '钻孔高程查询'];

const MapGrid = () => {
  const xs = Array.from({ length: 15 }, (_, i) => Math.round(24 + i * 73.1));
  const ys = Array.from({ length: 7 }, (_, i) => Math.round(73 + i * 87.4));
  return (
    <svg className="absolute inset-0 size-full" fontFamily="Liberation Serif, serif" fontSize="10" fill="#333">
      <defs>
        <linearGradient id="top" x2="0" y2="1"><stop offset="0" stopColor="#8d8d8d" /><stop offset="0.5" stopColor="#e2e2e2" /><stop offset="1" stopColor="#fff" /></linearGradient>
        <linearGradient id="side"><stop offset="0" stopColor="#a8a8a8" /><stop offset="0.5" stopColor="#ececec" /><stop offset="1" stopColor="#fff" /></linearGradient>
      </defs>
      <rect width="100%" height="100%" fill="#fff" />
      <rect width="11" height="100%" fill="url(#side)" />
      <rect width="100%" height="12" fill="url(#top)" />
      {xs.map(x => <path key={x} d={`M${x + 0.5} 13v900`} stroke="#cccccc" />)}
      {ys.map(y => <path key={y} d={`M11 ${y + 0.5}h1600`} stroke="#cccccc" />)}
      <path d="M0 12.500h2000" stroke="#c0c0c0" />
      <path d="M10.500 12v1000" stroke="#8a8a8a" />
      <path d="M0 46l3-3 7-4V12.500H28c6 0 8-4 10-8l5-3" fill="none" stroke="#333" />
      <path d="M1019 1l10 8q3 3 6 3.500h30M1 586l6 5q3 3 3.500 7v30" fill="none" stroke="#333" />
      <text x="1" y="10">LB</text>
      <text x="41" y="10">6.5"</text>
      {xs.slice(1, 14).map((x, i) => {
        const half = i < 6 ? 57 + i / 2 : (i - 6) / 2;
        return (
          <g key={x}>
            <path d={`M${x + 0.5} 2v11`} stroke="#333" />
            <text x={x - 1} y="10" textAnchor="end">{i < 6 ? '119°' : '120°'}</text>
            <text x={x + 2} y="10">{i < 6 ? `59'${half.toFixed(1)}"` : `00'0${half.toFixed(1)}"`}</text>
          </g>
        );
      })}
      {ys.map((y, i) => (
        <g key={y}>
          <path d={`M0 ${y + 0.5}h11`} stroke="#333" />
          <text transform={`translate(9 ${y + 2}) rotate(-90)`} textAnchor="end">-33°</text>
          <text transform={`translate(9 ${y - 1}) rotate(-90)`}>{`20'${(9 + i / 2).toFixed(1).padStart(4, '0')}"`}</text>
        </g>
      ))}
    </svg>
  );
};

const Dialog = () => (
  <form
    onSubmit={e => e.preventDefault()}
    className="absolute left-[405px] top-[256px] w-[222px] px-[5px] pb-[5px] rounded-md border border-[#22304a] bg-linear-to-r from-[#84ace0] via-[#5b8fd4] to-[#4a7fca] shadow-[0_2px_8px_2px_rgba(0,0,0,0.6)]"
  >
    <div className="flex h-[21px] items-center">
      <h2 className="text-[#16202e]">新建柱状图</h2>
      <button type="button" aria-label="关闭" className="self-start ml-auto w-8 h-[14px] rounded-b-sm border border-t-0 border-[#6b1a14] bg-linear-to-b from-[#dd9a8c] to-[#c3301c] text-white text-[9px] leading-3 font-bold">✕</button>
    </div>
    <div className="flex flex-col border border-[#dfe9f6] bg-[#f0f0f0] px-[7px] pt-2 pb-2">
      <div className="flex items-center mb-[10px]">
        <label htmlFor="colName" className="w-[51px]">柱状图名称</label>
        <div className="flex-1 h-4 flex items-center border border-[#8fbbe0] bg-white pl-[2px]">
          <input id="colName" defaultValue="新柱状图" className="w-[37px] h-[11px] bg-[#3397fd] text-[#e8f3ff] outline-none" />
        </div>
      </div>
      <div className="flex items-center mb-5">
        <label htmlFor="colScale" className="w-[51px]">比例尺</label>
        <input id="colScale" defaultValue="100" className="flex-1 min-w-0 h-4 border border-[#e3e5ea] bg-white pl-[2px] text-[8px]" />
      </div>
      <div className="flex justify-center gap-[21px]">
        <button type="submit" className="w-[55px] h-4 rounded-xs border-2 border-[#48b0d4] bg-linear-to-b from-[#f0f3f5] to-[#cbd6dc] leading-3">确定</button>
        <button type="button" className="w-[55px] h-4 rounded-xs border border-[#707070] bg-linear-to-b from-[#f3f3f3] to-[#cfcfcf] leading-3">取消</button>
      </div>
    </div>
  </form>
);

const Callouts = () => (
  <>
    <div className="absolute left-[570px] top-[39px] w-[333px] h-[245px]">
      <svg viewBox="0 0 333 245" className="absolute inset-0">
        <path d="M128 2H292Q330 4 330 20V87Q330 103 292 105H190L2 242 130 105Q90 103 90 87V20Q90 4 128 2z" fill="#fff" stroke="#000" strokeWidth="2" />
      </svg>
      <p className="relative pl-[118px] pt-4 text-[28px] leading-10 text-[#8b0000]">
        <b className="font-['Liberation_Serif','Noto_Sans_CJK_SC',serif]">1</b>、输入名称、<br />比例尺
        <span className="text-[10px] text-[#666]">↵</span>
      </p>
    </div>
    <div className="absolute left-[394px] top-[352px] w-[220px] h-[148px]">
      <svg viewBox="0 0 220 148" className="absolute inset-0">
        <path d="M39 63L80 2 92 63H182Q218 64 218 78V132Q218 145 182 146H38Q2 145 2 132V78Q2 64 39 63z" fill="#fff" stroke="#000" strokeWidth="2" />
      </svg>
      <p className="relative pl-[29px] pt-[77px] text-[28px] leading-10 text-[#8b0000]">
        <b className="font-['Liberation_Serif','Noto_Sans_CJK_SC',serif]">2</b>、点击确定
        <span className="text-[10px] text-[#666]">↵</span>
      </p>
    </div>
  </>
);

const Bar = () => <span className="w-px h-[10px] bg-[#333] mx-[7px]" />;

const SelectionBar = () => (
  <div className="flex items-center h-[19px] pl-[5px] bg-[#9b9b9b] whitespace-nowrap">
    <b className="text-[10px] w-[52px]">选择图元：</b>
    <span className="w-[52px]">鼠标操作&gt;&gt;</span>
    <label className="flex items-center gap-1 mr-[9px]"><input type="radio" name="mode" defaultChecked className="size-2" />增加选择</label>
    <label className="flex items-center gap-1 mr-[2px]"><input type="radio" name="mode" className="size-2" />剔除选择</label>
    <Bar />
    <a href="#condition" className="text-[#1a1ae0] underline">条件选择</a>
    <Bar />
    <a href="#props" className="text-[#1a1ae0] underline">属性显示</a>
    <Bar />
    <label className="flex items-center gap-[3px] ml-[4px]"><input type="checkbox" className="size-[9px]" />可选择只读图元</label>
    <Bar />
    <span className="mr-2">图形窗口中心(DMS)&gt;&gt;</span>
    <label htmlFor="lon" className="w-5">经度</label>
    <input id="lon" defaultValue="1200000.0000" className="w-[59px] h-[13px] bg-white px-px mr-[6px] text-[8px]" />
    <label htmlFor="lat" className="w-[21px]">纬度</label>
    <input id="lat" defaultValue="-332010.3956" className="w-[55px] h-[13px] bg-white px-px text-[8px]" />
    <Bar />
    <label htmlFor="scale" className="w-[47px]">显示比例尺</label>
    <input id="scale" defaultValue="500.000" className="w-12 h-[13px] bg-white px-px text-[8px]" />
  </div>
);

const App: React.FC = () => {
  return (
    <div className="h-screen bg-white px-[3px] overflow-hidden font-['Noto_Sans_CJK_SC',sans-serif] text-[9px] leading-3 text-[#222]">
      <div className="relative flex flex-col h-full bg-[#505050]">
        <header className="flex items-center h-[11px] pl-[2px] shrink-0 bg-linear-to-r from-[#a9bdd9] via-[#5f7fad] via-25% to-[#6583ab] text-[#111]">
          <Icon name="app" small />
          <h1 className="text-[10px] leading-[11px] ml-[2px] whitespace-nowrap">YTLWorld[AutoGIS(151218)应用程序] - 新数据库</h1>
          <div className="ml-auto flex gap-[11px] pr-4">
            <button aria-label="最小化"><svg viewBox="0 0 10 8" className="w-[10px] h-2"><path d="M1 4h8" stroke="#fff" strokeWidth="2" /></svg></button>
            <button aria-label="还原"><svg viewBox="0 0 10 8" className="w-[10px] h-2"><path d="M1 3h5v4H1zM3 1h6v4H6" stroke="#fff" fill="none" /></svg></button>
            <button aria-label="关闭" className="ml-2"><svg viewBox="0 0 10 8" className="w-[10px] h-2"><path d="M2 1l6 6M8 1L2 7" stroke="#fff" strokeWidth="2" /></svg></button>
          </div>
        </header>
        <span className="absolute left-[669px] -top-[23px] size-8 rounded-full border border-white bg-[#2fa84f] flex items-end justify-center text-[9px] text-white font-bold leading-[9px]">41</span>

        <nav className="flex items-center h-[17px] shrink-0 pl-[2px] text-[#efefef] whitespace-nowrap">
          <span className="w-[11px] flex flex-col gap-[2px]">
            {[0, 1, 2].map(i => <i key={i} className="size-[2px] bg-[#bbb]" />)}
          </span>
          <div className="flex gap-[11px]">
            {MENU.map(item => <button key={item}>{item}</button>)}
          </div>
        </nav>

        <div className="flex h-[19px] shrink-0 mb-px">
          {ROW_ONE.map((g, i) => <ToolGroup key={i} width={g.width}><ToolIcons icons={g.icons} /></ToolGroup>)}
          <ToolGroup width="w-[528px]"><FormatBar /></ToolGroup>
          <ToolGroup width="flex-1"><ToolIcons icons={['sn1', 'sn2', 'sn3', 'sn4', 'sn5', 'sn6', 'sn7', 'sn8', 'sn9', 'sn10', 'magnet']} /></ToolGroup>
        </div>
        <div className="flex h-[19px] shrink-0">
          {ROW_TWO.map((g, i) => <ToolGroup key={i} width={g.width}><ToolIcons icons={g.icons} /></ToolGroup>)}
        </div>

        <main className="flex flex-1 min-h-0 mb-[2px]">
          <aside className="flex flex-col w-[200px] mr-1 gap-[3px] shrink-0">
            <Panel
              title="花纹图例"
              size="h-[337px]"
              tabs={[{ icon: 'tabPoint', label: '点图例' }, { icon: 'tabLine', label: '线图例' }, { icon: 'tabPat', label: '花纹图例', active: true }]}
            >
              <div className="pt-px">
                <Root />
                <Leaf icon="pattern" label="无花纹" bold><span className="w-[30px] h-4 mx-px border border-[#222]" /></Leaf>
                <Leaf expand icon="folder" label="地表堆积物" />
                <Leaf expand icon="folder" label="松散沉积物" />
                <Leaf expand icon="folder" label="侵入岩" />
              </div>
            </Panel>
            <Panel
              title="颜色图例"
              size="flex-1"
              tabs={[{ icon: 'tabPoint', label: '标注样式' }, { icon: 'tabFont', label: '字体图例' }, { icon: 'tabColor', label: '颜色图例', active: true }]}
            >
              <div className="pt-px">
                <Root />
                <Leaf icon="color" label="自定义..."><span className="w-4 h-[10px] ml-[3px] mr-1 bg-black" /></Leaf>
                <Leaf icon="color" label="透明"><span className="w-4 h-[10px] ml-[3px] mr-1 border border-[#222]" /></Leaf>
                <Leaf expand icon="folder" label="通用" bold />
                <Leaf expand icon="folder" label="第四系" />
                <Leaf expand icon="folder" label="侵入体" />
              </div>
            </Panel>
          </aside>

          <div className="flex flex-col flex-1 min-w-0">
            <div className="relative flex-1 min-h-0 overflow-hidden">
              <MapGrid />
              <Dialog />
              <Callouts />
            </div>
            <div className="flex h-[18px] shrink-0 pl-[10px] bg-[#9ea3a1] border-b border-[#eee]">
              <button className="flex items-center w-[98px] gap-[2px]">
                <Icon name="app" small />YTLWorld起始页<span className="ml-auto mr-1 text-[10px] font-bold text-black">✕</span>
              </button>
              <button className="flex items-center w-[95px] gap-1 pl-1 bg-white text-[#2222dd]">
                <Icon name="tabSpace" small />空间图形编辑<span className="ml-auto mr-1 text-[10px] font-bold text-black">✕</span>
              </button>
              <span className="ml-auto self-center mr-1 text-[6px] text-[#777]">|◀ ◀ ▶ ▶|</span>
            </div>
          </div>

          <aside className="flex flex-col w-[172px] ml-[5px] gap-[2px] shrink-0">
            <Panel title="布局" size="h-[170px]" tabs={[{ icon: 'tabSpace', label: '空间图形' }, { icon: 'tabLayout', label: '布局', active: true }]}>
              <div className="pt-px">
                <Root flags />
                <Leaf expand dot bold icon="layout" label="地质矿产布局模板"><Flags /></Leaf>
                <Leaf expand icon="layout" label="A3工勘布局模板"><Flags off /></Leaf>
              </div>
              <HScroll thumb="w-full" />
            </Panel>
            <Panel title="柱状图" active size="flex-1" tabs={[{ icon: 'tabCol', label: '柱状图', active: true }, { icon: 'tabSec', label: '剖面图' }]}>
              <div className="pt-px">
                <Root flags />
                <Leaf expand dot bold icon="column" label="A3工勘柱状图模板"><Flags /></Leaf>
              </div>
              <HScroll thumb="w-full" />
            </Panel>
            <Panel title="查询表" size="h-[167px]" tabs={[{ icon: 'tabProp', label: '属性表' }, { icon: 'tabQuery', label: '查询表', active: true }, { icon: 'tabRep', label: 'GIS报告' }]}>
              <div className="flex flex-1 min-h-0">
                <div className="flex-1 min-w-0 flex flex-col">
                  <div className="flex-1 min-h-0 overflow-hidden">
                    <div className="-mt-0.5">
                      {QUERIES.map(q => (
                        <div key={q} className="flex items-center h-[18px] ml-10 border-l border-[#d8b8d0] whitespace-nowrap">
                          <span className="w-[6px] h-px bg-[#d8b8d0]" />
                          <Icon name="eye" />
                          <svg viewBox="0 0 20 13" className="w-5 h-[13px] mx-[2px] shrink-0">
                            <path d="M.5.5h19v12H.5zM5.500 0v13M10.500 0v13M15.500 0v13M0 4.500h20M0 8.500h20" fill="none" stroke="#555" />
                          </svg>
                          <span className={q === '重Ⅱ查询' ? 'text-[10px] font-bold' : ''}>{q}</span>
                        </div>
                      ))}
                    </div>
                  </div>
                  <HScroll thumb="w-[113px]" />
                </div>
                <VScroll top="h-[34px]" thumb="h-[29px]" />
              </div>
            </Panel>
          </aside>
        </main>

        <div className="flex h-[52px] shrink-0 bg-white">
          <div className="flex-1">
            <SelectionBar />
            <p className="pl-[5px] pt-[10px] whitespace-nowrap">
              <b>选定图元：</b>
              当前未选定图元，点击鼠标选择图元，如第一次点击未选中，则第二次点击开窗口选择，向左窗口为交叉选择，向右窗口为包含选择，如按下SHIFT键则为开窗口选择，按下CTRL键为循环单选
            </p>
          </div>
          <VScroll top="" thumb="h-[22px]" />
        </div>

        <footer className="flex items-center h-4 shrink-0 pl-[3px] bg-linear-to-b from-[#46474d] to-[#2b2a2e] text-[#e2e2e2] whitespace-nowrap">
          <span className="flex-1">若要获取帮助，请按 F1</span>
          <span className="w-[235px] pl-[3px] border-l border-[#5c5d63]">光标位置(DMS)：L=1200003.5085,B=-332010.0870</span>
          <span className="w-[88px] pl-[3px] border-l border-[#5c5d63]">比例尺：500.000</span>
          <span className="w-[178px] pl-[3px] border-l border-[#5c5d63]">坐标系统：国家2000</span>
          <span className="w-[198px] pl-[3px] border-l border-[#5c5d63]">地图投影：全球方位正射投影(窗口中心投影)</span>
        </footer>
      </div>
    </div>
  );
};

export default App;
